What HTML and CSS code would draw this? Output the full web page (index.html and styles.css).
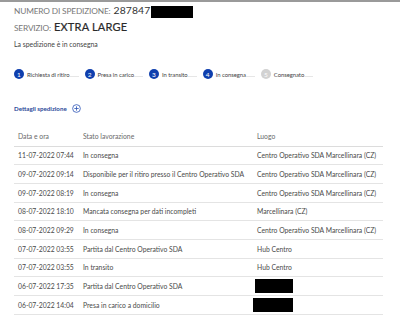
FILE: index.html
```html
<!DOCTYPE html>
<html lang="it">
<head>
<meta charset="utf-8">
<link rel="stylesheet" href="styles.css">
</head>
<body>
<div class="page">
  <div class="head-line">
    <span class="lbl">NUMERO DI SPEDIZIONE:</span>
    <span class="val">287847</span><span class="redact redact-num"></span>
  </div>
  <div class="head-line service">
    <span class="lbl">SERVIZIO:</span>
    <span class="val">EXTRA LARGE</span>
  </div>
  <p class="status">La spedizione è in consegna</p>

  <ol class="steps">
    <li class="step done"><span class="dot">1</span><span class="slabel">Richiesta di ritiro</span><span class="tail"></span></li>
    <li class="step done"><span class="dot">2</span><span class="slabel">Presa in carico</span><span class="tail"></span></li>
    <li class="step done"><span class="dot">3</span><span class="slabel">In transito</span><span class="tail"></span></li>
    <li class="step done"><span class="dot">4</span><span class="slabel">In consegna</span><span class="tail"></span></li>
    <li class="step todo"><span class="dot">5</span><span class="slabel">Consegnato</span><span class="tail"></span></li>
  </ol>

  <div class="details">
    <span>Dettagli spedizione</span>
    <svg class="plus" width="9" height="9" viewBox="0 0 10 10"><circle cx="5" cy="5" r="4.3" fill="none" stroke="#2f57b7" stroke-width="0.9"/><path d="M5 2.6V7.4M2.6 5H7.4" stroke="#2f57b7" stroke-width="0.9"/></svg>
  </div>

  <table class="track">
    <thead>
      <tr><th class="c-date">Data e ora</th><th class="c-state">Stato lavorazione</th><th class="c-place">Luogo</th></tr>
    </thead>
    <tbody>
      <tr><td>11-07-2022 07:44</td><td>In consegna</td><td>Centro Operativo SDA Marcellinara (CZ)</td></tr>
      <tr><td>09-07-2022 09:14</td><td>Disponibile per il ritiro presso il Centro Operativo SDA</td><td>Centro Operativo SDA Marcellinara (CZ)</td></tr>
      <tr><td>09-07-2022 08:19</td><td>In consegna</td><td>Centro Operativo SDA Marcellinara (CZ)</td></tr>
      <tr><td>08-07-2022 18:10</td><td>Mancata consegna per dati incompleti</td><td>Marcellinara (CZ)</td></tr>
      <tr><td>08-07-2022 09:29</td><td>In consegna</td><td>Centro Operativo SDA Marcellinara (CZ)</td></tr>
      <tr><td>07-07-2022 03:55</td><td>Partita dal Centro Operativo SDA</td><td>Hub Centro</td></tr>
      <tr><td>07-07-2022 03:55</td><td>In transito</td><td>Hub Centro</td></tr>
      <tr><td>06-07-2022 17:35</td><td>Partita dal Centro Operativo SDA</td><td><span class="redact redact-a"></span></td></tr>
      <tr><td>06-07-2022 14:04</td><td>Presa in carico a domicilio</td><td><span class="redact redact-b"></span></td></tr>
    </tbody>
  </table>
</div>
</body>
</html>
```

FILE: styles.css
```css
* { box-sizing: border-box; }
html, body { margin: 0; padding: 0; background: #fff; }
body {
  font-family: Lato, "Noto Sans", "Liberation Sans", sans-serif;
  color: #555;
  border-top: 2px solid #9a9a9a;
  width: 400px;
  height: 323px;
  overflow: hidden;
}
.page { padding: 2px 0 0 14px; }

.head-line { display: flex; align-items: baseline; height: 17px; }
.head-line .lbl { font-size: 8.3px; color: #777; letter-spacing: -0.15px; margin-right: 3px; }
.head-line .val { font-size: 10.4px; color: #333; letter-spacing: 0.1px; }
.head-line .redact-num { align-self: center; margin-top: -2px; }
.head-line.service { margin-top: -1px; }
.head-line.service .val { font-size: 11px; color: #2a2a2a; letter-spacing: 0.2px; -webkit-text-stroke: 0.2px #2a2a2a; }
.redact { display: inline-block; background: #000; }
.redact-num { width: 42px; height: 12px; margin-left: 1px; }

.status { margin: 3px 0 0; font-size: 6.9px; color: #444; }

.steps { list-style: none; margin: 21px 0 0; padding: 0; display: flex; align-items: center; }
.step { display: flex; align-items: center; margin-right: 6px; }
.dot {
  width: 10px; height: 10px; border-radius: 50%;
  display: flex; align-items: center; justify-content: center;
  font-size: 6.5px; color: #fff; background: #0f3fae;
  margin-right: 3px;
}
.step.todo .dot { background: #d2d2d2; }
.slabel { font-size: 5.9px; color: #444; letter-spacing: -0.05px; }
.tail { width: 9px; height: 4px; border-bottom: 1px solid #e6e6e6; align-self: flex-end; margin-bottom: 2px; }

.details { margin-top: 25px; display: flex; align-items: center; font-size: 6.2px; font-weight: 700; color: #2c4a9a; }
.details .plus { margin-left: 5px; }

.track { margin-top: 13px; width: 369px; border-collapse: collapse; font-size: 6.8px; color: #555; }
.track th { font-weight: 400; color: #6a6a6a; text-align: left; height: 20px; border-bottom: 1px solid #dcdcdc; padding: 0 0 0 4px; }
.track td { height: 18.7px; border-bottom: 1px solid #e4e4e4; padding: 0 0 0 4px; white-space: nowrap; color: #4a4a4a; }
.track th.c-date { width: 65px; }
.track th.c-state { width: 174px; }
.redact-a { width: 38px; height: 14px; vertical-align: middle; margin-left: -2px; }
.redact-b { width: 40px; height: 14px; vertical-align: middle; margin-left: -4px; }
```
